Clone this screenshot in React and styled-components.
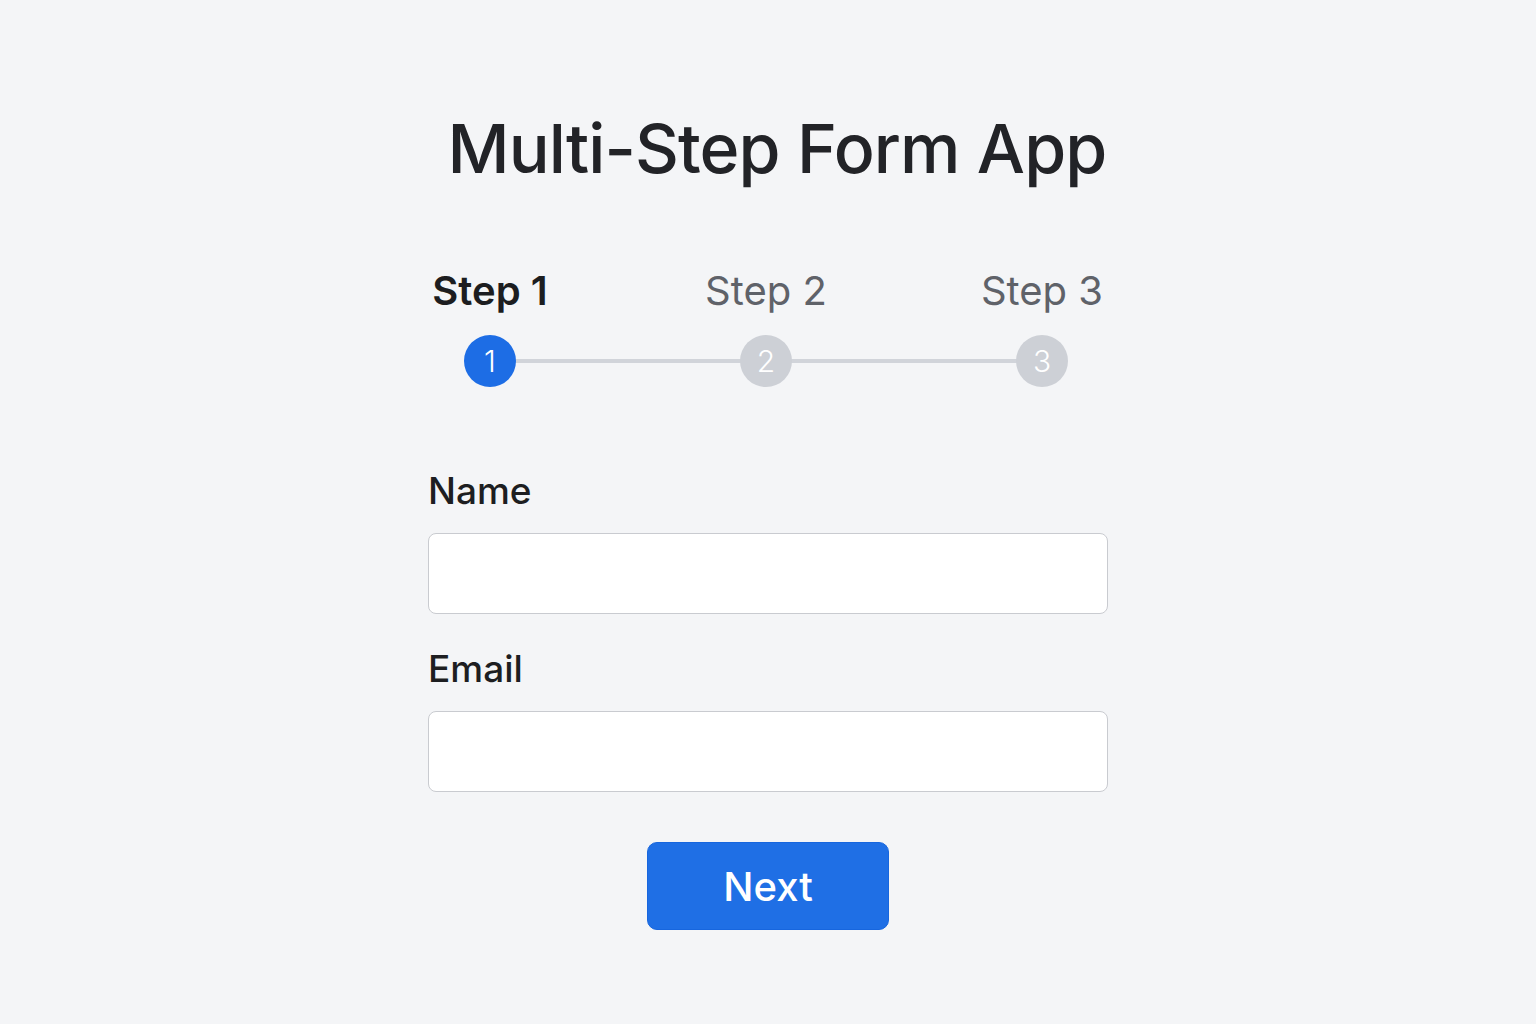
import styled, { createGlobalStyle } from "styled-components";

const GlobalStyle = createGlobalStyle`
  html, body {
    margin: 0;
    padding: 0;
    background: #f4f5f7;
    font-family: Inter, "Noto Sans", "Liberation Sans", sans-serif;
    color: #1f2023;
  }
`;

const Page = styled.div`
  width: 100%;
  min-height: 1024px;
  display: flex;
  justify-content: center;
`;

const Column = styled.div`
  width: 680px;
  display: flex;
  flex-direction: column;
  padding-top: 103px;
`;

const Title = styled.h1`
  margin: 0 0 0 18px;
  text-align: center;
  white-space: nowrap;
  font-size: 68px;
  line-height: 90px;
  font-weight: 500;
  letter-spacing: -0.9px;
  color: #222327;
`;

const Stepper = styled.div`
  position: relative;
  width: 672px;
  margin: 74px 0 0 2px;
  display: flex;
  justify-content: space-between;
`;

const Track = styled.div`
  position: absolute;
  left: 60px;
  right: 60px;
  bottom: 26px;
  height: 4px;
  margin-bottom: -2px;
  background: #d1d4da;
`;

const Step = styled.div`
  position: relative;
  width: 120px;
  display: flex;
  flex-direction: column;
  align-items: center;
  gap: 20px;
`;

const StepLabel = styled.div`
  font-size: 40px;
  line-height: 48px;
  white-space: nowrap;
  font-weight: ${(p) => (p.active ? 600 : 400)};
  color: ${(p) => (p.active ? "#1c1d20" : "#5f6269")};
`;

const Dot = styled.div`
  width: 52px;
  height: 52px;
  border-radius: 50%;
  display: flex;
  align-items: center;
  justify-content: center;
  font-size: 30px;
  font-weight: 300;
  color: #ffffff;
  background: ${(p) => (p.active ? "#1d6de5" : "#cdd0d6")};
`;

const Form = styled.form`
  margin-top: 80px;
  display: flex;
  flex-direction: column;
`;

const Label = styled.label`
  font-size: 37px;
  line-height: 48px;
  font-weight: 500;
  color: #1d1e21;
  margin-bottom: 18px;
`;

const Input = styled.input`
  box-sizing: border-box;
  width: 100%;
  height: 81px;
  border: 1.5px solid #c9cbd0;
  border-radius: 8px;
  background: #ffffff;
  font-size: 28px;
  padding: 0 20px;
  margin-bottom: 31px;
  outline: none;
`;

const Button = styled.button`
  align-self: center;
  width: 242px;
  height: 88px;
  margin-top: 19px;
  border: 1px solid #1766de;
  border-radius: 10px;
  background: #1f6fe5;
  color: #ffffff;
  font-family: inherit;
  font-size: 40px;
  font-weight: 500;
  cursor: pointer;
`;

const steps = ["Step 1", "Step 2", "Step 3"];

export default function App() {
  return (
    <Page>
      <GlobalStyle />
      <Column>
        <Title>Multi-Step Form App</Title>
        <Stepper>
          <Track />
          {steps.map((s, i) => (
            <Step key={s}>
              <StepLabel active={i === 0}>{s}</StepLabel>
              <Dot active={i === 0}>{i + 1}</Dot>
            </Step>
          ))}
        </Stepper>
        <Form onSubmit={(e) => e.preventDefault()}>
          <Label>Name</Label>
          <Input type="text" />
          <Label>Email</Label>
          <Input type="email" />
          <Button type="submit">Next</Button>
        </Form>
      </Column>
    </Page>
  );
}
